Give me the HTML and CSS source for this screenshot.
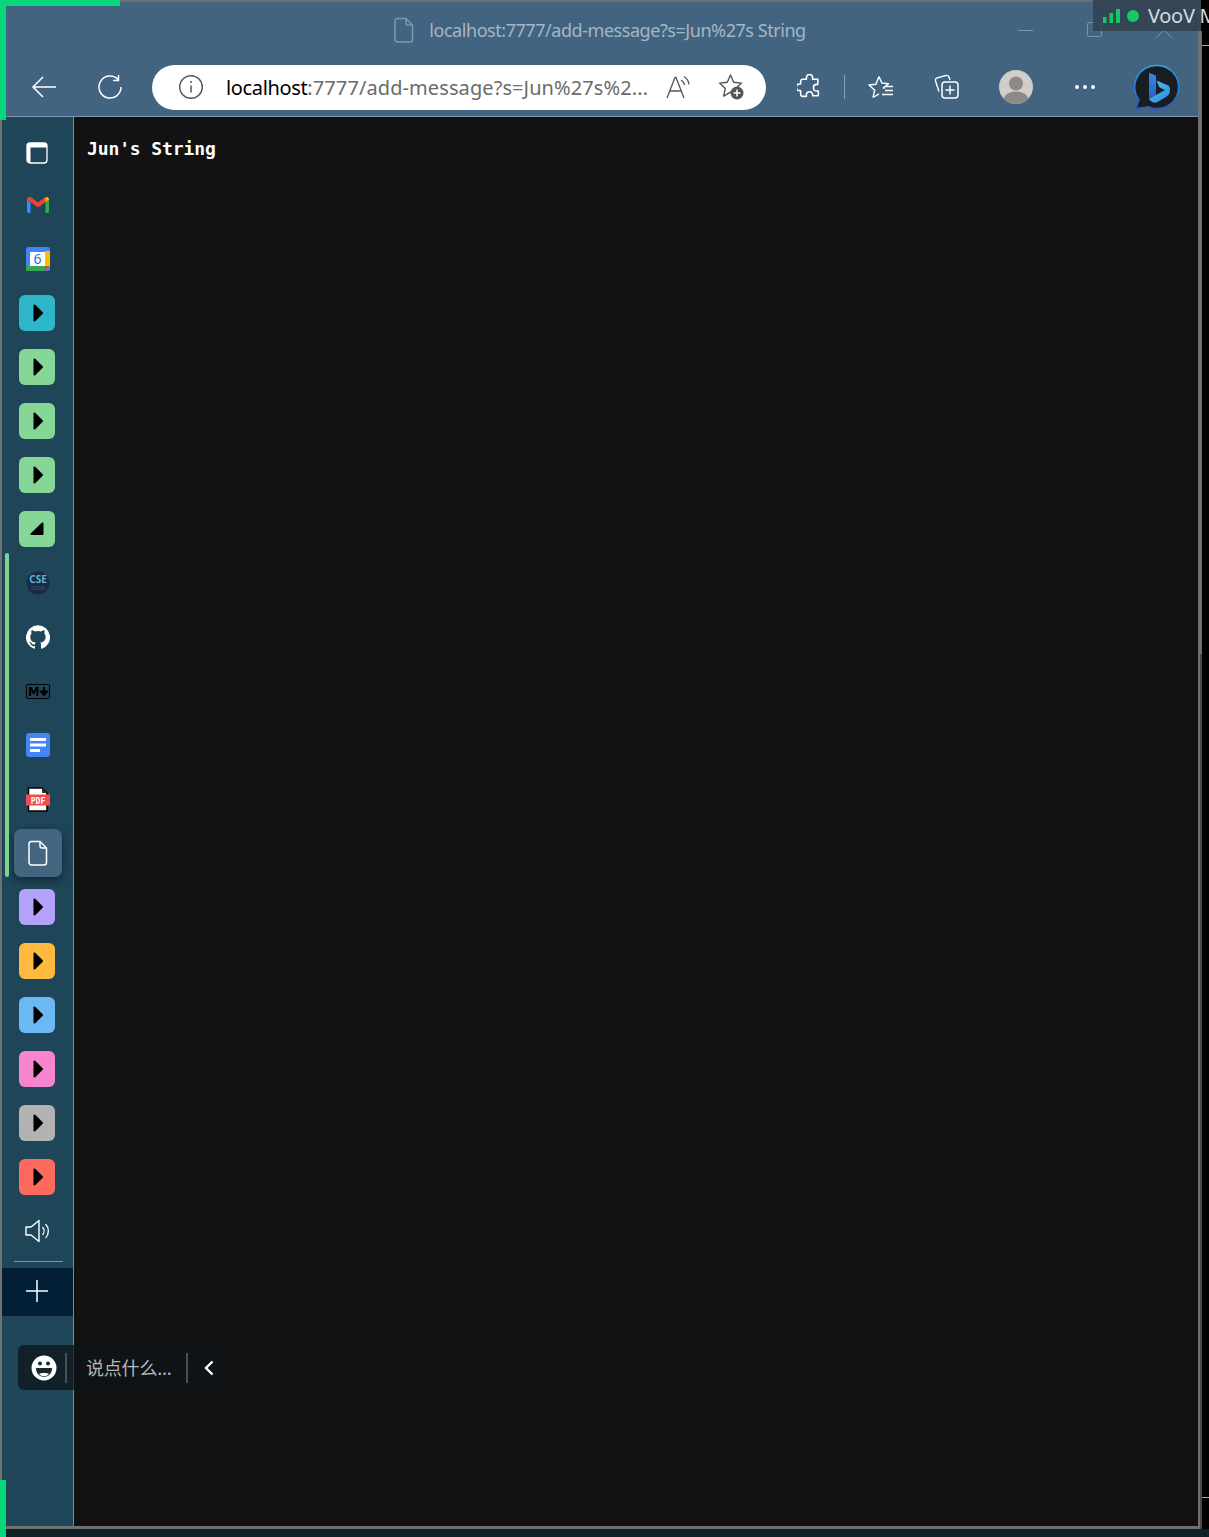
FILE: index.html
```html
<!DOCTYPE html>
<html lang="en">
<head>
<meta charset="utf-8">
<title>localhost:7777/add-message?s=Jun%27s String</title>
<link rel="stylesheet" href="styles.css">
</head>
<body>
<svg class="defs" width="0" height="0" aria-hidden="true">
  <symbol id="play" viewBox="0 0 36 36"><path d="M15.500 10.500v15l7.500-7.500z" fill="#000" stroke="#000" stroke-width="2" stroke-linejoin="round"/></symbol>
  <symbol id="doc" viewBox="0 0 20 26"><path d="M3 1.500h9l6.500 6.500V22.500a2.500 2.500 0 0 1-2.500 2.500H3.500A2.500 2.500 0 0 1 1 22.500V4a2.500 2.500 0 0 1 2-2.500zM12 1.500V6a2 2 0 0 0 2 2h4.500" fill="none" stroke="currentColor" stroke-width="1.500"/></symbol>
</svg>
<div class="window">
  <header class="chrome">
    <div class="titlebar">
      <div></div>
      <div class="title">
        <svg class="title-doc" width="20" height="26"><use href="#doc"/></svg>
        <span>localhost:7777/add-message?s=Jun%27s String</span>
      </div>
      <div class="controls">
        <span class="ctl"><svg width="16" height="16" viewBox="0 0 16 16"><path d="M0 8.500h15" stroke="currentColor"/></svg></span>
        <span class="ctl"><svg width="16" height="16" viewBox="0 0 16 16"><rect x=".5" y=".5" width="14" height="14" rx="2" fill="none" stroke="currentColor"/></svg></span>
        <span class="ctl"><svg width="16" height="16" viewBox="0 0 16 16"><path d="M.5.500l15 15M15.500.500l-15 15" stroke="currentColor"/></svg></span>
      </div>
    </div>
    <div class="toolbar">
      <button class="tb"><svg width="26" height="24" viewBox="0 0 26 24"><path d="M25 12H2M12 2 2 12l10 10" fill="none" stroke="#fff" stroke-width="1.500"/></svg></button>
      <button class="tb"><svg width="26" height="26" viewBox="0 0 26 26"><path d="M21 5.500A11 11 0 1 0 24 13M21.500 1v5.500H16" fill="none" stroke="#fff" stroke-width="1.500"/></svg></button>
      <div class="address">
        <svg class="info" width="26" height="26" viewBox="0 0 26 26"><circle cx="13" cy="13" r="11.300" fill="none" stroke="#555" stroke-width="1.400"/><path d="M13 11.500v7" stroke="#555" stroke-width="1.500"/><circle cx="13" cy="8" r="1" fill="#555"/></svg>
        <span class="url"><span class="host">localhost</span><span class="path">:7777/add-message?s=Jun%27s%2...</span></span>
        <svg class="aloud" width="24" height="24" viewBox="0 0 24 24"><path d="M1 23 9 2.500h1L18 23M4 16h11M15 5a7 7 0 0 1 3.500 5M18 1.500a11 11 0 0 1 5 8" fill="none" stroke="#555" stroke-width="1.300"/></svg>
        <svg class="star-add" width="28" height="28" viewBox="0 0 28 28"><path d="M12.500 2l3.200 7.300 7.800.8-5.800 5.300 1.700 7.700-6.900-4-6.900 4 1.700-7.700L1.500 10.100l7.800-.8z" fill="none" stroke="#555" stroke-width="1.400" stroke-linejoin="round"/><circle cx="19" cy="20" r="6.500" fill="#555"/><path d="M19 16.500v7M15.500 20h7" stroke="#fff" stroke-width="1.500"/></svg>
      </div>
      <button class="tb tb-ext"><svg width="25" height="26" viewBox="0 0 24 25"><path d="M9 3.500a3 3 0 0 1 6 0V5h5v5h-1a3.200 3.200 0 0 0 0 6.400H20.500V21h-5.500v-1a3 3 0 0 0-6 0v1.500H5.500a2 2 0 0 1-2-2V16H2.500a3.200 3.200 0 0 1 0-6.400H3.500V7a2 2 0 0 1 2-2H9z" fill="none" stroke="#fff" stroke-width="1.500" stroke-linejoin="round"/></svg></button>
      <span class="tb-sep"></span>
      <button class="tb tb-fav"><svg width="26" height="24" viewBox="0 0 26 24"><path d="M11 1.500l2.800 6.500 6.700.6-5.200 4.400 1.600 0M5 22.500l1.700-7.300L1 10l6.900-.8L11 1.500M5 22.500l6-3.600M17 11.500h8M17 15.500h8M14 19.500h11" fill="none" stroke="#fff" stroke-width="1.400" stroke-linejoin="round"/></svg></button>
      <button class="tb"><svg width="26" height="26" viewBox="0 0 26 26"><path d="M5 17.500 1.500 7a2.500 2.500 0 0 1 1.700-3.100L12 1.500A2.500 2.500 0 0 1 15 3l1 3" fill="none" stroke="#fff" stroke-width="1.400"/><rect x="8" y="8" width="16" height="16" rx="3" fill="#426480" stroke="#fff" stroke-width="1.500"/><path d="M16 11.500v9M11.500 16h9" stroke="#fff" stroke-width="1.500"/></svg></button>
      <button class="tb tb-user"><svg width="34" height="34" viewBox="0 0 34 34"><circle cx="17" cy="17" r="17" fill="#d0cec9"/><circle cx="17" cy="13.500" r="7" fill="#8d8985"/><path d="M4.500 28.500C7 23.500 11 21.500 17 21.500s10 2 12.500 7a17 17 0 0 1-25 0z" fill="#8d8985"/></svg></button>
      <button class="tb tb-more"><svg width="22" height="6" viewBox="0 0 22 6"><circle cx="3" cy="3" r="2" fill="#fff"/><circle cx="11" cy="3" r="2" fill="#fff"/><circle cx="19" cy="3" r="2" fill="#fff"/></svg></button>
      <button class="tb tb-bing"><svg width="46" height="46" viewBox="0 0 46 46">
        <defs>
          <linearGradient id="bingA" x1="0" y1="0" x2="0" y2="1"><stop offset="0" stop-color="#2f8ce0"/><stop offset="1" stop-color="#2a5fc4"/></linearGradient>
          <linearGradient id="bingB" x1="0" y1="0" x2="1" y2="1"><stop offset="0" stop-color="#4fd0f0"/><stop offset="1" stop-color="#2b7fe0"/></linearGradient>
          <linearGradient id="bingC" x1="0" y1="0" x2="0" y2="1"><stop offset="0" stop-color="#2fa8ea"/><stop offset="1" stop-color="#2357c4"/></linearGradient>
        </defs>
        <path d="M23 1.500a21.500 21.500 0 1 1-8.500 41.200L2 44.500l3-8.500A21.500 21.500 0 0 1 23 1.500z" fill="#1a1d22" stroke="url(#bingC)" stroke-width="1.500"/>
        <path d="M15 9l7 2.500v19.500l-7 4z" fill="url(#bingA)"/>
        <path d="M15 35l7-4 9-5-5.500-2.500-3-7 12 5c1.500 1 1.500 3 1.500 5 0 3-1.500 5-4 6.500l-8.500 5c-3 1.800-6 .5-8.500-3z" fill="url(#bingB)"/>
      </svg></button>
    </div>
  </header>
  <div class="body-row">
    <nav class="sidebar">
      <div class="item"><svg class="shift-panel" width="22" height="22" viewBox="0 0 22 22"><path d="M4 1h14a3 3 0 0 1 3 3v14a3 3 0 0 1-3 3H4a3 3 0 0 1-3-3V4a3 3 0 0 1 3-3z" fill="none" stroke="#fff" stroke-width="1.300"/><path d="M1 4a3 3 0 0 1 3-3h14a3 3 0 0 1 3 3v1.500H4.500V21a3 3 0 0 1-3.500-3z" fill="#fff"/></svg></div>
      <div class="item"><svg width="24" height="18" viewBox="0 0 24 18"><path d="M1 17V3.500L4.500 6v11H2.500A1.500 1.500 0 0 1 1 15.500z" fill="#4285f4"/><path d="M19.500 17V6L23 3.500v12a1.500 1.500 0 0 1-1.500 1.500z" fill="#34a853"/><path d="M1 3.500C1 1 3.500 0 5.500 1.500L12 6.500l6.500-5c2-1.500 4.500-.5 4.500 2L19.500 6 12 11.500 4.500 6z" fill="#ea4335"/><path d="M19.500 6V1.800c1.700-1.200 3.500 0 3.500 1.700z" fill="#fbbc04"/></svg></div>
      <div class="item"><svg width="24" height="24" viewBox="0 0 24 24"><rect width="24" height="24" rx="2" fill="#4285f4"/><rect x="19" y="4" width="5" height="16" fill="#fbbc04"/><rect y="19" width="20" height="5" fill="#34a853"/><path d="M19 24l5-5h-5z" fill="#ea4335"/><rect x="4" y="5" width="15" height="14" fill="#fff"/><text class="cal-day" x="11.500" y="17" text-anchor="middle">6</text></svg></div>
      <div class="item"><span class="tile t-teal"><svg width="36" height="36"><use href="#play"/></svg></span></div>
      <div class="item"><span class="tile t-green"><svg width="36" height="36"><use href="#play"/></svg></span></div>
      <div class="item"><span class="tile t-green"><svg width="36" height="36"><use href="#play"/></svg></span></div>
      <div class="item"><span class="tile t-green"><svg width="36" height="36"><use href="#play"/></svg></span></div>
      <div class="item"><span class="tile t-green"><svg width="36" height="36" viewBox="0 0 36 36"><path d="M23.500 12.500v10.500H12.500z" fill="#000" stroke="#000" stroke-width="2" stroke-linejoin="round"/></svg></span></div>
      <div class="item"><svg width="24" height="24" viewBox="0 0 24 24"><circle cx="12" cy="12" r="11.500" fill="#1c2a4a"/><text class="cse" x="12" y="12" text-anchor="middle">CSE</text><text class="ucsd" x="12" y="18.500" text-anchor="middle">UCSD</text></svg></div>
      <div class="item"><svg width="24" height="24" viewBox="0 0 24 24"><path fill="#fff" d="M12 .3a12 12 0 0 0-3.800 23.400c.6.100.8-.3.8-.6v-2c-3.300.7-4-1.600-4-1.600-.6-1.400-1.400-1.800-1.400-1.800-1-.7.100-.7.100-.7 1.200 0 1.900 1.200 1.900 1.200 1 1.800 2.800 1.300 3.500 1 0-.8.400-1.300.7-1.600-2.700-.3-5.500-1.300-5.500-6 0-1.200.5-2.300 1.300-3.100-.2-.4-.6-1.600 0-3.200 0 0 1-.3 3.400 1.200a11.500 11.500 0 0 1 6 0c2.300-1.500 3.300-1.200 3.300-1.200.6 1.600.2 2.800 0 3.200.9.800 1.300 1.900 1.300 3.200 0 4.600-2.800 5.600-5.500 5.900.5.400.9 1 .9 2.200v3.300c0 .3.100.7.8.6A12 12 0 0 0 12 .3"/></svg></div>
      <div class="item"><svg width="24" height="15" viewBox="0 0 24 15"><rect x=".5" y=".5" width="23" height="14" rx="1.500" fill="none" stroke="#000"/><text class="md" x="2" y="12">M</text><path d="M18 3v7M15 7.500l3 3.500 3-3.500z" stroke="#000" stroke-width="2"/></svg></div>
      <div class="item"><svg width="24" height="24" viewBox="0 0 24 24"><rect width="24" height="24" rx="3" fill="#4285f4"/><path d="M4 5h16v3H4zM4 10.500h16v3H4zM4 16h10v3H4z" fill="#fff"/></svg></div>
      <div class="item"><svg width="24" height="25" viewBox="0 0 24 25"><path d="M2.500 1H16l5 5v18H2.500z" fill="#fff" stroke="#000" stroke-width="1.500"/><path d="M16 1v5h5z" fill="#333"/><rect y="7.500" width="24" height="11" fill="#f44c4c"/><text class="pdf" x="12" y="16.500" text-anchor="middle">PDF</text></svg></div>
      <div class="item"><span class="active-tile"><svg class="file-white" width="20" height="26"><use href="#doc"/></svg></span></div>
      <div class="item"><span class="tile t-purple"><svg width="36" height="36"><use href="#play"/></svg></span></div>
      <div class="item"><span class="tile t-orange"><svg width="36" height="36"><use href="#play"/></svg></span></div>
      <div class="item"><span class="tile t-blue"><svg width="36" height="36"><use href="#play"/></svg></span></div>
      <div class="item"><span class="tile t-pink"><svg width="36" height="36"><use href="#play"/></svg></span></div>
      <div class="item"><span class="tile t-gray"><svg width="36" height="36"><use href="#play"/></svg></span></div>
      <div class="item"><span class="tile t-red"><svg width="36" height="36"><use href="#play"/></svg></span></div>
      <div class="item item-sound"><svg width="25" height="24" viewBox="0 0 25 24"><path d="M1 8h5l8-6.500v21L6 16H1z" fill="none" stroke="#fff" stroke-width="1.400" stroke-linejoin="round"/><path d="M17.500 8a6 6 0 0 1 0 8M20.500 5a10 10 0 0 1 0 14" fill="none" stroke="#fff" stroke-width="1.300"/></svg></div>
      <div class="divider"></div>
      <div class="add"><svg width="22" height="22" viewBox="0 0 22 22"><path d="M11 0v22M0 11h22" stroke="#fff" stroke-width="1.500"/></svg></div>
    </nav>
    <main class="content">Jun's String</main>
  </div>
</div>
<div class="footer-band"></div>

<div class="edge edge-top"></div>
<div class="edge edge-left"></div>
<div class="edge edge-bottom"></div>
<div class="group-bar"></div>
<div class="strip strip-upper"></div>
<div class="strip strip-lower"></div>
<div class="side-line side-line-a"></div>
<div class="side-line side-line-b"></div>

<div class="voov">
  <svg class="voov-bars" width="17" height="14" viewBox="0 0 17 14"><path d="M0 8h3.500v6H0zM6.500 4H10v10H6.500zM13 0h4v14h-4z" fill="#17c964"/></svg>
  <span class="voov-dot"></span>
  <span class="voov-name">VooV Meeting</span>
</div>

<div class="chat">
  <svg width="26" height="26" viewBox="0 0 26 26"><circle cx="13" cy="13" r="12.500" fill="#fff"/><circle cx="9" cy="8.500" r="2" fill="#16292f"/><circle cx="17" cy="8.500" r="2" fill="#16292f"/><path d="M5 13h16c0 5.500-3.500 9-8 9s-8-3.500-8-9z" fill="#16292f"/><path d="M8 18.800c1.500-1 8.500-1 10 0-1.500 2-3 2.500-5 2.500s-3.500-.5-5-2.500z" fill="#fff"/></svg>
  <span class="chat-sep"></span>
  <span class="chat-text">说点什么...</span>
  <span class="chat-sep"></span>
  <svg class="chev" width="12" height="18" viewBox="0 0 12 18"><path d="M9.500 2.500 3 9l6.500 6.500" fill="none" stroke="#fff" stroke-width="2.400"/></svg>
</div>
</body>
</html>
```
FILE: styles.css
```css
* { box-sizing: border-box; }
html, body { margin: 0; padding: 0; }
body {
  width: 1209px;
  height: 1537px;
  background: #000;
  overflow: hidden;
  position: relative;
  font-family: "Noto Sans", sans-serif;
}
.defs { position: absolute; }
button { background: none; border: 0; padding: 0; }

.window {
  width: 1200px;
  height: 1529px;
  border: solid #707070;
  border-width: 2px 2px 3px 2px;
  display: flex;
  flex-direction: column;
}
.chrome {
  background: #426480;
  height: 115px;
  border-bottom: 1px solid #7d9ab0;
  flex: none;
}
.titlebar {
  height: 55px;
  display: grid;
  grid-template-columns: 1fr auto 1fr;
  align-items: center;
}
.title {
  display: flex;
  align-items: center;
  gap: 15px;
  color: #a4b6c4;
  font-size: 18px;
  letter-spacing: -0.45px;
}
.title-doc { color: #7f98ab; }
.controls { display: flex; justify-self: end; color: #7f98ab; }
.ctl { width: 69px; height: 44px; display: flex; align-items: center; justify-content: center; }

.toolbar { height: 59px; display: flex; align-items: center; padding: 1px 0 0 9px; }
.tb { width: 66px; height: 46px; display: flex; align-items: center; justify-content: center; flex: none; }
.address {
  width: 614px;
  height: 45px;
  margin-left: 9px;
  flex: none;
  border-radius: 23px;
  background: #fff;
  display: flex;
  align-items: center;
  padding-left: 26px;
}
.url {
  margin-left: 22px;
  width: 430px;
  white-space: nowrap;
  font-size: 20px;
}
.host { color: #000; letter-spacing: -0.35px; }
.path { color: #6b6b6b; letter-spacing: 0.09px; }
.aloud { margin-left: 10px; }
.star-add { margin-left: 28px; }
.tb-ext { margin-left: 10px; }
.tb-sep { width: 1px; height: 24px; background: #8ba1b3; margin-left: 2px; flex: none; }
.tb-fav { margin-left: 3px; }
.tb-user { margin-left: 3px; }
.tb-more { margin-left: 3px; }
.tb-bing { margin-left: 6px; }

.body-row { flex: 1; display: flex; min-height: 0; }
.sidebar {
  width: 72px;
  flex: none;
  background: #1f4559;
  border-right: 1px solid #6f90a6;
  padding-top: 7px;
  display: flex;
  flex-direction: column;
}
.item { height: 54px; flex: none; display: flex; align-items: center; justify-content: center; padding-left: 1px; }
.item-sound { padding-left: 0; }
.shift-panel { position: relative; top: 2px; margin-left: -2px; }
.tile { width: 36px; height: 36px; border-radius: 6px; display: block; margin-left: -2px; }
.tile svg { display: block; }
.t-teal { background: #2eb6c9; }
.t-green { background: #86d695; }
.t-purple { background: #b4a2fa; }
.t-orange { background: #ffb93e; }
.t-blue { background: #6cb8f5; }
.t-pink { background: #f784cf; }
.t-gray { background: #b2b2b2; }
.t-red { background: #ff6a5f; }
.active-tile {
  width: 48px;
  height: 48px;
  border-radius: 7px;
  background: #436580;
  box-shadow: 0 3px 8px rgba(0, 0, 0, .45);
  display: flex;
  align-items: center;
  justify-content: center;
}
.file-white { color: #fff; }
.cal-day { font: 400 14px "Noto Sans", sans-serif; fill: #1a73e8; }
.cse { font: 700 10px "Noto Sans", sans-serif; fill: #5bb4d4; }
.ucsd { font: 700 5px "Noto Sans", sans-serif; fill: #3c4a5e; }
.md { font: 700 11.500px "DejaVu Sans", sans-serif; fill: #000; }
.pdf { font: 700 8px "DejaVu Sans Mono", monospace; fill: #fff; }

.divider { height: 1px; background: #7d97a8; margin: 3px 10px 0 12px; flex: none; }
.add {
  height: 48px;
  margin-top: 6px;
  padding-right: 2px;
  background: #021f36;
  flex: none;
  display: flex;
  align-items: center;
  justify-content: center;
}
.add svg { position: relative; top: -1px; }

.content {
  flex: 1;
  background: #121212;
  color: #fff;
  font: 700 18px/24px "DejaVu Sans Mono", "Liberation Mono", monospace;
  letter-spacing: -0.12px;
  padding: 20px 0 0 13px;
}
.footer-band { position: absolute; left: 0; right: 0; top: 1529px; height: 8px; background: #0f2027; }

.edge { position: absolute; left: 0; background: #06d77b; }
.edge-top { top: 0; width: 120px; height: 6px; }
.edge-left { top: 0; width: 6px; height: 120px; }
.edge-bottom { top: 1480px; width: 6px; height: 57px; }
.group-bar { position: absolute; left: 5px; top: 553px; width: 4px; height: 324px; border-radius: 2px; background: #7fd38f; }
.strip { position: absolute; left: 1200px; width: 2px; }
.strip-upper { top: 0; height: 654px; background: #707070; }
.strip-lower { top: 654px; height: 875px; background: #4a4a4a; }
.side-line { position: absolute; background: #74bfe0; height: 1px; left: 1202px; right: 0; }
.side-line-a { top: 45px; }
.side-line-b { top: 1497px; }

.voov {
  position: absolute;
  left: 1093px;
  top: 0;
  width: 116px;
  height: 31px;
  background: linear-gradient(to right, rgba(50, 66, 80, .88) 108px, #000 108px);
  display: flex;
  align-items: center;
  padding-left: 10px;
  white-space: nowrap;
  overflow: hidden;
}
.voov-bars { flex: none; }
.voov-dot { width: 12px; height: 12px; border-radius: 50%; background: #17c964; margin-left: 7px; flex: none; }
.voov-name { margin-left: 9px; color: #d6dadd; font-size: 20px; letter-spacing: -0.3px; }

.chat {
  position: absolute;
  left: 18px;
  top: 1345px;
  width: 212px;
  height: 45px;
  border-radius: 6px;
  background: rgba(14, 20, 22, .72);
  display: flex;
  align-items: center;
  padding-left: 13px;
}
.chat-sep { width: 2px; height: 30px; background: #4a4f50; flex: none; margin-left: 8px; }
.chat-text {
  margin-left: 19px;
  margin-right: 6px;
  font: 18px/1 "Noto Sans CJK SC", sans-serif;
  letter-spacing: -0.2px;
  color: #b5b8b8;
  white-space: nowrap;
  position: relative;
  top: -1px;
}
.chat-text + .chat-sep { margin-left: 8px; }
.chev { margin-left: 15px; }
```
